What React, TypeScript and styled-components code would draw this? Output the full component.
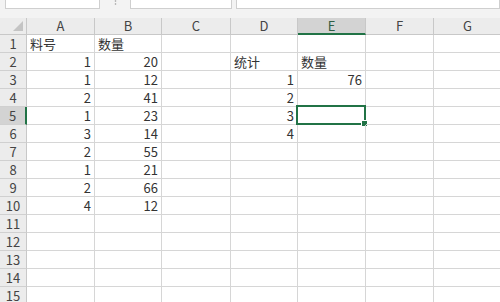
import React from "react";
import styled, { createGlobalStyle } from "styled-components";

const GlobalStyle = createGlobalStyle`
  html, body {
    margin: 0;
    padding: 0;
    background: #ffffff;
    overflow: hidden;
  }
  body {
    font-family: "Noto Sans CJK SC", "Noto Sans", sans-serif;
  }
`;

const COLS = [68, 67, 69, 67, 68, 68, 68];
const LETTERS = ["A", "B", "C", "D", "E", "F", "G"];
const SEL_COL = 4;
const SEL_ROW = 5;

type Cell = { text?: string; num?: boolean };

const data: Record<number, Cell[]> = {
  1: [{ text: "料号" }, { text: "数量" }],
  2: [{ text: "1", num: true }, { text: "20", num: true }, {}, { text: "统计" }, { text: "数量" }],
  3: [{ text: "1", num: true }, { text: "12", num: true }, {}, { text: "1", num: true }, { text: "76", num: true }],
  4: [{ text: "2", num: true }, { text: "41", num: true }, {}, { text: "2", num: true }],
  5: [{ text: "1", num: true }, { text: "23", num: true }, {}, { text: "3", num: true }],
  6: [{ text: "3", num: true }, { text: "14", num: true }, {}, { text: "4", num: true }],
  7: [{ text: "2", num: true }, { text: "55", num: true }],
  8: [{ text: "1", num: true }, { text: "21", num: true }],
  9: [{ text: "2", num: true }, { text: "66", num: true }],
  10: [{ text: "4", num: true }, { text: "12", num: true }],
};

const Page = styled.div`
  width: 500px;
  height: 302px;
  overflow: hidden;
  display: flex;
  flex-direction: column;
  background: #fff;
`;

const FormulaBar = styled.div`
  height: 9px;
  display: flex;
  align-items: stretch;
  background: #f3f3f3;
  flex-shrink: 0;
`;

const InputBox = styled.div<{ $w: number; $ml: number }>`
  width: ${({ $w }) => $w}px;
  margin-left: ${({ $ml }) => $ml}px;
  background: #fff;
  border: 1px solid #cfcfcf;
  border-top: none;
  box-sizing: border-box;
`;

const Grip = styled.div`
  width: 30px;
  display: flex;
  justify-content: center;
  align-items: flex-start;
`;

const Band = styled.div`
  height: 9px;
  background: #f3f3f3;
  flex-shrink: 0;
`;

const Grid = styled.div`
  display: grid;
  grid-template-columns: 27px ${COLS.map((w) => `${w}px`).join(" ")};
  grid-template-rows: 17px;
  grid-auto-rows: 18px;
`;

const Corner = styled.div`
  position: relative;
  background: #ececec;
  border-right: 1px solid #c8c8c8;
  border-bottom: 1px solid #c8c8c8;
  box-sizing: border-box;
  &::after {
    content: "";
    position: absolute;
    right: 3px;
    bottom: 3px;
    width: 0;
    height: 0;
    border-left: 10px solid transparent;
    border-bottom: 10px solid #c4c4c4;
  }
`;

const ColHead = styled.div<{ $sel?: boolean }>`
  background: ${({ $sel }) => ($sel ? "#d3d3d3" : "#ececec")};
  border-right: 1px solid #c8c8c8;
  border-bottom: ${({ $sel }) => ($sel ? "2px solid #217346" : "1px solid #c8c8c8")};
  box-sizing: border-box;
  color: ${({ $sel }) => ($sel ? "#2f5e44" : "#444")};
  font-size: 13px;
  line-height: 16px;
  text-align: center;
`;

const RowHead = styled.div<{ $sel?: boolean }>`
  background: ${({ $sel }) => ($sel ? "#d3d3d3" : "#ececec")};
  border-right: ${({ $sel }) => ($sel ? "2px solid #217346" : "1px solid #c8c8c8")};
  border-bottom: 1px solid #d0d0d0;
  box-sizing: border-box;
  color: #444;
  font-size: 13px;
  line-height: 18px;
  text-align: center;
`;

const GridCell = styled.div<{ $num?: boolean }>`
  position: relative;
  border-right: 1px solid #d6d6d6;
  border-bottom: 1px solid #d6d6d6;
  box-sizing: border-box;
  padding: 0 3px 0 3px;
  color: #333;
  font-size: 13px;
  line-height: 17px;
  text-align: ${({ $num }) => ($num ? "right" : "left")};
  white-space: nowrap;
`;

const Selection = styled.div`
  position: absolute;
  left: -2px;
  top: -2px;
  right: -1px;
  bottom: -1px;
  border: 2px solid #217346;
  pointer-events: none;
  &::after {
    content: "";
    position: absolute;
    right: -4px;
    bottom: -4px;
    width: 5px;
    height: 5px;
    background: #217346;
    border: 1px solid #fff;
  }
`;

export default function App() {
  const rows = Array.from({ length: 15 }, (_, i) => i + 1);
  return (
    <>
      <GlobalStyle />
      <Page>
        <FormulaBar>
          <InputBox $w={96} $ml={5} />
          <Grip>
            <svg width="3" height="7" viewBox="0 0 3 7">
              <circle cx="1.5" cy="1" r="0.8" fill="#9a9a9a" />
              <circle cx="1.5" cy="4" r="0.8" fill="#9a9a9a" />
            </svg>
          </Grip>
          <InputBox $w={102} $ml={0} />
          <InputBox $w={266} $ml={4} />
        </FormulaBar>
        <Band />
        <Grid>
          <Corner />
          {LETTERS.map((l, i) => (
            <ColHead key={l} $sel={i === SEL_COL}>
              {l}
            </ColHead>
          ))}
          {rows.map((r) => (
            <React.Fragment key={r}>
              <RowHead $sel={r === SEL_ROW}>{r}</RowHead>
              {LETTERS.map((l, c) => {
                const cell = (data[r] || [])[c] || {};
                return (
                  <GridCell key={l} $num={cell.num}>
                    {cell.text}
                    {r === SEL_ROW && c === SEL_COL && <Selection />}
                  </GridCell>
                );
              })}
            </React.Fragment>
          ))}
        </Grid>
      </Page>
    </>
  );
}
